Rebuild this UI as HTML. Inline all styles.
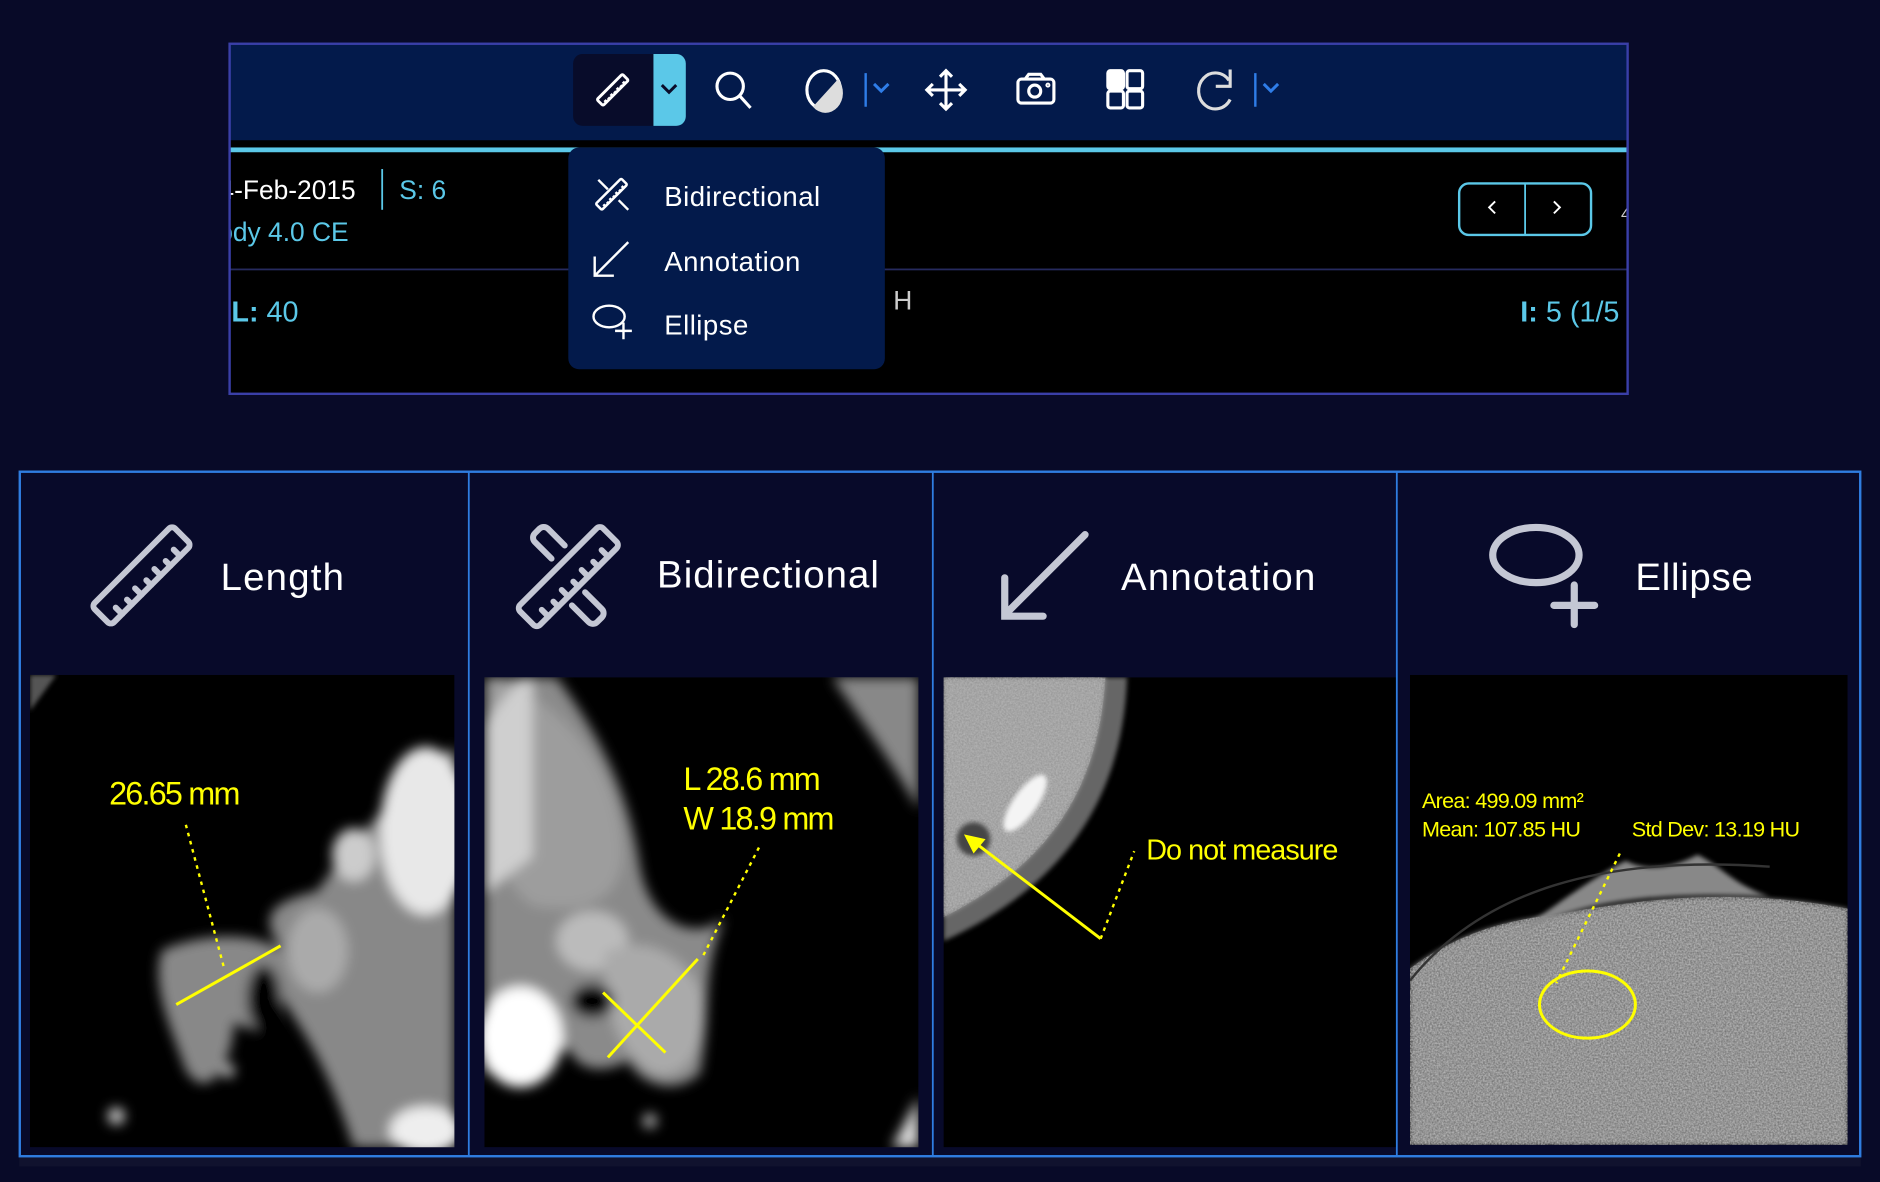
<!DOCTYPE html>
<html><head><meta charset="utf-8"><style>
html,body{margin:0;padding:0;background:#080a28;}
svg{display:block}
text{font-family:"Liberation Sans",sans-serif}
</style></head><body>
<svg width="1880" height="1182" viewBox="0 0 1568 986" preserveAspectRatio="none" xmlns="http://www.w3.org/2000/svg">
<defs>
<clipPath id="pc"><rect x="192" y="36" width="1165" height="293"/></clipPath>
<filter id="bl" x="-20%" y="-20%" width="140%" height="140%"><feGaussianBlur stdDeviation="5"/></filter>
<filter id="bl2"><feGaussianBlur stdDeviation="2"/></filter>
<filter id="noise" x="0" y="0" width="100%" height="100%">
<feTurbulence type="fractalNoise" baseFrequency="0.7" numOctaves="2" seed="3"/>
<feColorMatrix values="0 0 0 0 0.55  0 0 0 0 0.55  0 0 0 0 0.55  0 0 0 1.6 -0.3"/>
<feComposite in2="SourceGraphic" operator="in"/>
</filter>
<g id="ruler">
<rect x="-50" y="-12" width="100" height="24" rx="4" fill="none"/>
<path d="M-36 12v-8M-24 12v-6M-12 12v-8M0 12v-6M12 12v-8M24 12v-6M36 12v-8" fill="none"/>
</g>
</defs>
<rect width="1568" height="986" fill="#080a28"/>

<!-- top panel -->
<rect x="191" y="36" width="1167" height="293" fill="#000"/>
<rect x="191" y="36" width="1167" height="81" fill="#031a4b"/>
<rect x="191" y="123" width="1167" height="4" fill="#5bc8e8"/>
<rect x="191" y="224" width="1167" height="1.5" fill="#262a5e"/>

<!-- active tool -->
<rect x="478" y="45" width="94" height="60" rx="8" fill="#080c2a"/>
<path d="M545 45h19a8 8 0 0 1 8 8v44a8 8 0 0 1-8 8h-19z" fill="#5bc8e8"/>
<path d="M552 71l6 6 6-6" fill="none" stroke="#0a0c2a" stroke-width="2.5"/>
<use href="#ruler" transform="translate(511,75) rotate(-45) scale(0.3)" stroke="#fff" stroke-width="8"/>

<!-- toolbar icons -->
<g fill="none" stroke="#fff" stroke-width="2.6">
<circle cx="609" cy="72" r="11"/><path d="M617 80l9 10"/>
<ellipse cx="687" cy="75" rx="14" ry="16"/>
<path d="M699 66 A14 16 0 0 1 678 89 Z" fill="#ddd" stroke="none"/>
<path d="M789 59v32M773 75h32M784 64l5-5 5 5M784 86l5 5 5-5M778 70l-5 5 5 5M800 70l5 5-5 5"/>
<rect x="849" y="66" width="30" height="20" rx="3"/><path d="M855 66l3-4h10l3 4"/><circle cx="863" cy="76" r="5"/><circle cx="874" cy="71" r="0.8"/>
<rect x="924" y="59" width="13" height="15" rx="2" fill="#fff"/><rect x="940" y="59" width="13" height="15" rx="2"/><rect x="924" y="76" width="13" height="14" rx="2"/><rect x="940" y="76" width="13" height="14" rx="2"/>
<path d="M1025 67A14 15 0 1 0 1026 83" stroke="#ddd"/><path d="M1026 58v14h-12" stroke="#ddd"/>
</g>
<g stroke="#2f7de8" stroke-width="2" fill="none">
<path d="M722 61v28M1047 61v28"/>
<path d="M729 70l6 6 6-6M1054 70l6 6 6-6" stroke-width="2.5"/>
</g>

<!-- info texts -->
<g clip-path="url(#pc)">
<text x="183" y="166" font-size="22" fill="#fff">4-Feb-2015</text>
<rect x="318" y="141" width="1.5" height="34" fill="#5bc8e8"/>
<text x="333" y="166" font-size="22" fill="#5bc8e8">S: 6</text>
<text x="182" y="201" font-size="22" fill="#5bc8e8">ody 4.0 CE</text>
<text x="193" y="268" font-size="24" fill="#5bc8e8"><tspan font-weight="bold">L:</tspan> 40</text>
<text x="745" y="258" font-size="22" fill="#ccc">H</text>
<text x="1268" y="268" font-size="24" fill="#5bc8e8"><tspan font-weight="bold">I:</tspan> 5 (1/5</text>
<text x="1352" y="183" font-size="14" fill="#ccc">4</text>
</g>
<rect x="191.5" y="36.5" width="1166" height="292" fill="none" stroke="#3a3fa8" stroke-width="2"/>
<rect x="1217" y="153" width="110" height="43" rx="8" fill="none" stroke="#5bc8e8" stroke-width="2"/>
<path d="M1272 153v43" stroke="#5bc8e8" stroke-width="1.5"/>
<path d="M1247 168l-5 5 5 5M1296 168l5 5-5 5" fill="none" stroke="#fff" stroke-width="1.6"/>

<!-- dropdown -->
<rect x="474" y="123" width="264" height="185" rx="9" fill="#031a4b"/>
<g stroke="#fff" stroke-width="2" fill="none">
<path d="M499 150l8 8M516 167l8 8"/>
<use href="#ruler" transform="translate(510,162) rotate(-45) scale(0.3)" stroke-width="7"/>
<path d="M524 202l-28 28M496 214v16h16"/>
<ellipse cx="508" cy="264" rx="13" ry="9"/><path d="M520 269v14M513 276h14"/>
</g>
<text x="554" y="172" font-size="23" fill="#fff" letter-spacing="0.4">Bidirectional</text>
<text x="554" y="226" font-size="23" fill="#fff" letter-spacing="0.4">Annotation</text>
<text x="554" y="279" font-size="23" fill="#fff" letter-spacing="0.4">Ellipse</text>

<!-- bottom grid -->
<rect x="16" y="965" width="1536" height="8" fill="#10122e"/>
<rect x="17" y="394" width="1534" height="570" fill="#080a2a"/>

<!-- col1 image -->
<svg x="25" y="563" width="354" height="394" viewBox="0 0 354 394">
<rect width="354" height="394" fill="#000"/>
<g filter="url(#bl)">
<path d="M354 60 C300 100 260 150 240 180 C200 190 190 200 210 230 C180 210 130 220 110 230 C100 260 120 300 130 330 C150 360 170 320 170 290 C190 300 200 300 210 270 C230 300 250 330 270 394 L354 394Z" fill="#888"/>
<ellipse cx="330" cy="130" rx="38" ry="70" fill="#e8e8e8"/>
<ellipse cx="270" cy="150" rx="18" ry="22" fill="#ccc"/>
<ellipse cx="240" cy="230" rx="25" ry="35" fill="#aaa"/>
<ellipse cx="330" cy="380" rx="30" ry="20" fill="#eee"/>
<ellipse cx="195" cy="270" rx="14" ry="28" fill="#000"/>
<circle cx="72" cy="368" r="7" fill="#ccc"/>
<circle cx="165" cy="330" r="6" fill="#aaa"/>
</g>
<path d="M0 0h22l-22 30z" fill="#555" filter="url(#bl2)"/>
</svg>
<path d="M147 838L234 789" stroke="#ffff00" stroke-width="2.5"/>
<path d="M155 688L187 808" stroke="#ffff00" stroke-width="2" stroke-dasharray="3 4"/>
<text x="91" y="671" font-size="27" fill="#ffff00" letter-spacing="-1.5">26.65 mm</text>

<!-- col2 image -->
<svg x="404" y="565" width="362" height="392" viewBox="0 0 362 392">
<rect width="362" height="392" fill="#000"/>
<g filter="url(#bl)">
<path d="M0 0 H60 C90 40 120 90 130 160 C140 210 180 220 200 200 C180 250 190 270 180 330 C160 350 130 340 120 320 C100 330 80 330 70 310 L0 330Z" fill="#8a8a8a"/>
<path d="M10 0 C60 20 110 70 115 140 C118 180 90 200 40 190 C10 170 0 120 5 0Z" fill="#9d9d9d"/>
<path d="M0 40 C20 10 30 0 40 0 L40 150 L0 180Z" fill="#cfcfcf"/>
<ellipse cx="30" cy="300" rx="35" ry="42" fill="#fff"/>
<ellipse cx="90" cy="220" rx="30" ry="25" fill="#bbb"/>
<path d="M100 230 C140 210 170 240 180 260 C190 300 170 340 140 330 C110 310 100 280 100 230Z" fill="#aaa"/>
<ellipse cx="90" cy="270" rx="18" ry="14" fill="#000"/>
<path d="M290 0 L362 0 L362 110 C340 70 310 30 290 0Z" fill="#888"/>
<circle cx="138" cy="370" r="6" fill="#aaa"/>
<path d="M362 350 L362 392 L340 392Z" fill="#ddd"/>
</g>
</svg>
<path d="M507 882L582 800M503 828L555 878" stroke="#ffff00" stroke-width="2.5"/>
<path d="M633 707L585 800" stroke="#ffff00" stroke-width="2" stroke-dasharray="3 4"/>
<text x="570" y="659" font-size="27" fill="#ffff00" letter-spacing="-1.5">L 28.6 mm</text>
<text x="570" y="692" font-size="27" fill="#ffff00" letter-spacing="-1.5">W 18.9 mm</text>

<!-- col3 image -->
<svg x="787" y="565" width="378" height="392" viewBox="0 0 378 392">
<rect width="378" height="392" fill="#000"/>
<path d="M0 0 H153 C150 90 110 170 0 220Z" fill="#666" filter="url(#bl2)"/>
<path d="M0 0 H135 C130 80 100 150 0 200Z" fill="#999" filter="url(#bl2)"/>
<path d="M0 0 H135 C130 80 100 150 0 200Z" fill="#fff" filter="url(#noise)" opacity="0.6"/>
<ellipse cx="68" cy="105" rx="10" ry="28" transform="rotate(35 68 105)" fill="#f4f4f4" filter="url(#bl2)"/>
<ellipse cx="25" cy="135" rx="14" ry="14" fill="#444" filter="url(#bl2)"/>
</svg>
<path d="M918 783L812 702" stroke="#ffff00" stroke-width="2.5"/>
<path d="M804 696L822 700L812 712Z" fill="#ffff00"/>
<path d="M918 783L946 710" stroke="#ffff00" stroke-width="2" stroke-dasharray="3 4"/>
<text x="956" y="717" font-size="24" fill="#ffff00" letter-spacing="-0.8">Do not measure</text>

<!-- col4 image -->
<svg x="1176" y="563" width="365" height="392" viewBox="0 0 365 392">
<rect width="365" height="392" fill="#000"/>
<path d="M0 392 V245 C40 215 80 205 120 200 C180 190 260 175 365 195 V392Z" fill="#777" filter="url(#bl2)"/>
<path d="M0 392 V245 C40 215 80 205 120 200 C180 190 260 175 365 195 V392Z" fill="#fff" filter="url(#noise)" opacity="0.8"/>
<path d="M90 215 C130 185 160 165 180 155 C200 165 220 160 240 150 C260 160 270 175 300 185 C200 180 140 190 90 215Z" fill="#888" filter="url(#bl2)"/>
<path d="M0 255 C60 180 160 150 300 160" stroke="#333" stroke-width="2" fill="none"/>
</svg>
<ellipse cx="1324" cy="838" rx="40" ry="28" fill="none" stroke="#ffff00" stroke-width="2.5"/>
<path d="M1351 712L1298 820" stroke="#ffff00" stroke-width="2" stroke-dasharray="3 4"/>
<text x="1186" y="674" font-size="18" fill="#ffff00" letter-spacing="-0.6">Area: 499.09 mm²</text>
<text x="1186" y="698" font-size="18" fill="#ffff00" letter-spacing="-0.6">Mean: 107.85 HU</text>
<text x="1361" y="698" font-size="18" fill="#ffff00" letter-spacing="-0.6">Std Dev: 13.19 HU</text>

<!-- grid lines -->
<rect x="16.5" y="393.5" width="1535" height="571" fill="none" stroke="#2f7de0" stroke-width="2"/>
<path d="M391 393v572M778 393v572M1165 393v572" stroke="#2f7de0" stroke-width="1.5"/>

<!-- header icons -->
<g stroke="#c4c7d4" stroke-width="5" fill="none" stroke-linecap="round">
<use href="#ruler" transform="translate(118,480) rotate(-45) scale(0.95)" stroke-width="5.2"/>
<path d="M460 466 l-14 -14 a5 5 0 0 1 0 -7 l4 -4 a5 5 0 0 1 7 0 l14 14M488 494l14 14 a5 5 0 0 1 0 7 l-4 4 a5 5 0 0 1 -7 0 l-14 -14"/>
<use href="#ruler" transform="translate(474,481) rotate(-45) scale(0.98)" stroke-width="5"/>
<path d="M905 446l-67 67M838 482v32h32" stroke-width="6"/>
<ellipse cx="1281" cy="463" rx="36" ry="23" stroke-width="6"/>
<path d="M1313 488v33M1296 505h34" stroke-width="6"/>
</g>
<text x="184" y="492" font-size="32" fill="#fff" letter-spacing="1">Length</text>
<text x="548" y="490" font-size="32" fill="#fff" letter-spacing="0.9">Bidirectional</text>
<text x="935" y="492" font-size="32" fill="#fff" letter-spacing="1">Annotation</text>
<text x="1364" y="492" font-size="32" fill="#fff" letter-spacing="0.6">Ellipse</text>
</svg>
</body></html>
